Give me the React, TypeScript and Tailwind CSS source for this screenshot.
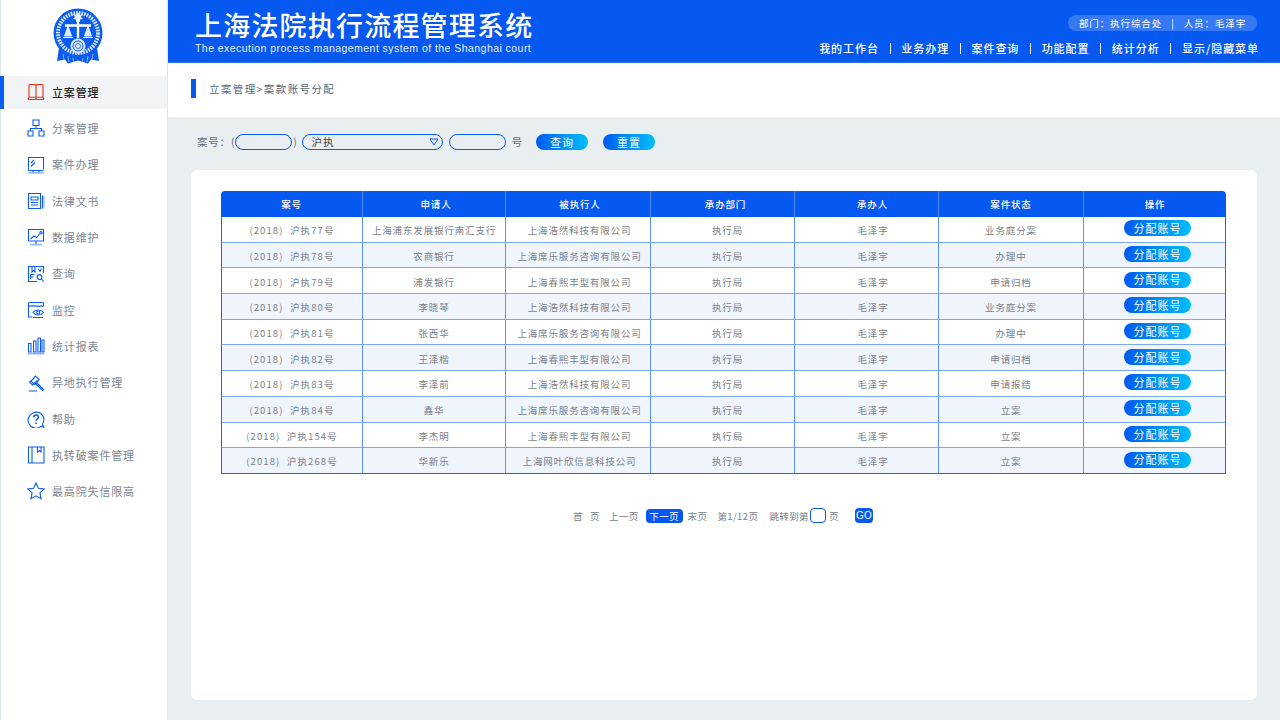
const cjk = { fontFamily: '"Noto Sans CJK SC", "Noto Sans", sans-serif' };

type Row = { no: string; applicant: string; respondent: string; status: string };

const rows: Row[] = [
  { no: "(2018)  沪执77号", applicant: "上海浦东发展银行南汇支行", respondent: "上海浩然科技有限公司", status: "业务庭分案" },
  { no: "(2018)  沪执78号", applicant: "农商银行", respondent: "上海席乐服务咨询有限公司", status: "办理中" },
  { no: "(2018)  沪执79号", applicant: "浦发银行", respondent: "上海春熙丰型有限公司", status: "申请归档" },
  { no: "(2018)  沪执80号", applicant: "李晓琴", respondent: "上海浩然科技有限公司", status: "业务庭分案" },
  { no: "(2018)  沪执81号", applicant: "张西华", respondent: "上海席乐服务咨询有限公司", status: "办理中" },
  { no: "(2018)  沪执82号", applicant: "王泽楷", respondent: "上海春熙丰型有限公司", status: "申请归档" },
  { no: "(2018)  沪执83号", applicant: "李泽前", respondent: "上海浩然科技有限公司", status: "申请报结" },
  { no: "(2018)  沪执84号", applicant: "鑫华", respondent: "上海席乐服务咨询有限公司", status: "立案" },
  { no: "(2018)  沪执154号", applicant: "李杰明", respondent: "上海春熙丰型有限公司", status: "立案" },
  { no: "(2018)  沪执268号", applicant: "华新乐", respondent: "上海网叶欣信息科技公司", status: "立案" },
];

const headers = ["案号", "申请人", "被执行人", "承办部门", "承办人", "案件状态", "操作"];
const headerPad = ["", "pl-[4px]", "pl-[4px]", "pl-[6px]", "pl-[12px]", "", ""];
const navLinks = ["我的工作台", "业务办理", "案件查询", "功能配置", "统计分析", "显示/隐藏菜单"];

function Icon({ children, color = "#0a5cf0" }: { children: React.ReactNode; color?: string }) {
  return (
    <svg width="18" height="18" viewBox="0 0 18 18" fill="none" stroke={color} strokeWidth="1.1">
      {children}
    </svg>
  );
}

const menu: { label: string; icon: React.ReactNode }[] = [
  {
    label: "立案管理",
    icon: (
      <Icon color="#e8321e">
        <path d="M2 1.500h6.200c.5 0 .8.3.8.8v12.200M16 1.500H9.800c-.5 0-.8.3-.8.8M2 1.500v12.800h14V1.500M1 16.500h16M2 14.300l-1 2.200M16 14.300l1 2.200M9 14.500v2" />
      </Icon>
    ),
  },
  {
    label: "分案管理",
    icon: (
      <Icon>
        <path d="M6 1h6v5.500H6zM1 12h5v5H1zM12 12h5v5h-5zM9 6.500v3M3.500 12V9.500h11V12" />
      </Icon>
    ),
  },
  {
    label: "案件办理",
    icon: (
      <Icon>
        <path d="M16.500 13.500V1.500h-15v13h15M4 7l3-3M4 10.500l4-4" />
        <path d="M6 14.500v2M12 14.500v2" />
        <path d="M1.500 16.800h15" stroke="#8db3f7" strokeWidth="1.600" />
      </Icon>
    ),
  },
  {
    label: "法律文书",
    icon: (
      <Icon>
        <path d="M13.500 16.500h-12v-15h12zM15.500 3.500v13M4 5h7v3H4zM4 10.500h7M4 13h7" />
        <path d="M17 4v11.500" stroke="#8db3f7" />
      </Icon>
    ),
  },
  {
    label: "数据维护",
    icon: (
      <Icon>
        <path d="M1.500 13V1.500h15v11.500h-15M3.500 11l3.500-3 2.500 1.500 3-3.500" />
        <circle cx="14" cy="4.800" r="1.200" />
        <path d="M9 13v3" />
        <path d="M3 16.600h12" stroke="#8db3f7" strokeWidth="1.600" />
      </Icon>
    ),
  },
  {
    label: "查询",
    icon: (
      <Icon>
        <path d="M16.500 8V1.500h-15v15H10M5 1.500V7l1.500-1.500L8 7V1.500M11 3.500l2 3 1.500-3M3.500 9.500h4M3.500 9.500v4.500M3.500 12h3" />
        <circle cx="12.500" cy="12" r="2.400" />
        <path d="M14.300 13.800l2.400 2.700" />
      </Icon>
    ),
  },
  {
    label: "监控",
    icon: (
      <Icon>
        <path d="M1.500 6V2.500c0-.6.4-1 1-1h13c.6 0 1 .4 1 1V5c-1 1-2-.6-3 0s-2 .6-3 0-2 .6-3 0-2 .6-3 0-2 .6-3 0" />
        <path d="M1.500 6v10h4M6 16.500h10" />
        <path d="M6 11.500c2.500-3.300 7.500-3.300 10.500 0-3 3.300-8 3.300-10.500 0z" />
        <circle cx="11.200" cy="11.500" r="1.500" />
      </Icon>
    ),
  },
  {
    label: "统计报表",
    icon: (
      <Icon>
        <path d="M1.500 6.500h2.500v8.500H1.500zM6.500 4h2.500v11H6.500zM11 1h2.500v14H11zM15 3h2v12h-2z" />
        <path d="M1 16.500h16" stroke="#8db3f7" strokeWidth="2" />
      </Icon>
    ),
  },
  {
    label: "异地执行管理",
    icon: (
      <Icon>
        <path d="M4 7l4.500-5 3.700 3.500-4.700 5zM7.500 3.800L2.500 8l3 3 5-4.500M9.500 8.500l7 7-1 1-7.200-7M2 17h8" />
      </Icon>
    ),
  },
  {
    label: "帮助",
    icon: (
      <Icon>
        <path d="M16.800 17.200l-2.400-1A8 8 0 1 1 17 9c0 2.400-.8 4-1.500 5z" />
        <path d="M6.800 7.200c0-3 4.600-3 4.600 0 0 1.700-2.300 1.800-2.300 3.600" strokeWidth="1.500" />
        <path d="M9 12.500v1.500" strokeWidth="1.600" />
      </Icon>
    ),
  },
  {
    label: "执转破案件管理",
    icon: (
      <Icon>
        <path d="M1.500 1h15.500v16H1.500zM5 1v16M10.500 1v5l1.800-1.300L14 6V1" />
      </Icon>
    ),
  },
  {
    label: "最高院失信限高",
    icon: (
      <Icon>
        <path d="M9 1l2.400 5.300 5.800.7-4.300 3.900 1.200 5.800L9 13.800l-5.100 2.900 1.200-5.800L.8 7l5.800-.7z" />
      </Icon>
    ),
  },
];

function Emblem() {
  return (
    <svg width="50" height="58" viewBox="0 0 50 58">
      <path d="M6 40l-2 13 8-1.500 3 4 10-3 10 3 3-4 8 1.500-2-13z" fill="#0a5cf0" />
      <path d="M10 46l1 5.500M15 48l1 6M20 50l.5 4M30 50l-.5 4M35 48l-1 6M40 46l-1 5.500" stroke="#a9c6fa" strokeWidth="0.800" />
      <circle cx="25" cy="25" r="24.500" fill="#0a5cf0" />
      <circle cx="25" cy="25" r="20" fill="none" stroke="#dbe7fd" strokeWidth="4" strokeDasharray="1.600 1.100" />
      <circle cx="25" cy="25" r="17.500" fill="#0a5cf0" />
      <path d="M25 4l2 3 3-1-2 3 2 2-3 .5V14h-4v-2.500L20 11l2-2-2-3 3 1z" fill="#e8f0fe" />
      <path d="M12 17.500h26M25 12v18" stroke="#fff" strokeWidth="2.400" />
      <path d="M15 18l-3.500 10h7zM35 18l-3.500 10h7z" fill="#dbe7fd" stroke="#fff" strokeWidth="0.800" />
      <path d="M10 29.500h10M30 29.500h10" stroke="#fff" strokeWidth="1.200" />
      <circle cx="25" cy="38" r="7.500" fill="#dbe7fd" />
      <circle cx="25" cy="38" r="5" fill="none" stroke="#0a5cf0" strokeWidth="1" />
      <circle cx="25" cy="38" r="2.500" fill="none" stroke="#0a5cf0" strokeWidth="0.800" />
    </svg>
  );
}

function Sidebar() {
  return (
    <aside className="w-[168px] h-[720px] shrink-0 bg-white border-x border-[#dbe7f8] flex flex-col">
      <div className="h-[74px] flex justify-center pt-[8px] pr-[12px] shrink-0">
        <Emblem />
      </div>
      <nav className="flex flex-col">
        {menu.map((item, i) => (
          <div key={item.label} className="h-[36.300px] flex items-center -ml-px">
            <div
              className={
                i === 0
                  ? "h-[33px] w-full flex items-center gap-[7px] pl-[23px] bg-[#f1f3f5] border-l-4 border-[#0a5cf0] text-[#222222] font-medium"
                  : "h-[33px] w-full flex items-center gap-[7px] pl-[27px] text-[#7b8694]"
              }
            >
              <span className="w-[18px] h-[18px] shrink-0 block">{item.icon}</span>
              <span className="text-[11px] tracking-[0.850px] whitespace-nowrap">{item.label}</span>
            </div>
          </div>
        ))}
      </nav>
    </aside>
  );
}

function Header() {
  return (
    <header className="h-[63px] bg-[#0558f0] border-b border-[#2b73f5] flex justify-between pl-[27px] pr-[21px] shrink-0">
      <div className="pt-[9px]">
        <div className="text-white text-[27px] leading-[32px] font-medium tracking-[1.200px] whitespace-nowrap">上海法院执行流程管理系统</div>
        <div
          className="text-[#e6efff] text-[10.500px] leading-[14px] tracking-[0.450px] whitespace-nowrap"
          style={{ fontFamily: '"Liberation Sans", sans-serif' }}
        >
          The execution process management system of the Shanghai court
        </div>
      </div>
      <div className="flex flex-col items-end pt-[15px]">
        <div className="h-[16px] w-[189px] mr-[2px] rounded-full bg-white/20 text-white text-[9.500px] tracking-[0.900px] flex items-center justify-center whitespace-pre">
          部门：执行综合处   |   人员：毛泽宇
        </div>
        <div className="flex items-center mt-[9px] text-white text-[11px] font-medium tracking-[0.950px] whitespace-nowrap">
          {navLinks.map((link, i) => (
            <div key={link} className="flex items-center">
              {i > 0 && <span className="w-px h-[11px] bg-white mx-[10.700px]" />}
              <span>{link}</span>
            </div>
          ))}
        </div>
      </div>
    </header>
  );
}

function SearchBar() {
  const pill = "h-[16px] rounded-full border border-[#0a5cf0]";
  const btn = "w-[52px] h-[16px] rounded-full bg-gradient-to-r from-[#0558f0] to-[#08bdf8] text-white text-[11px] tracking-[1px] flex items-center justify-center";
  return (
    <div className="h-[53px] flex items-center pl-[29px] pb-[3px] text-[#666e78] text-[10.500px] tracking-[0.800px] shrink-0">
      <span className="whitespace-nowrap">案号：(</span>
      <div className={`${pill} w-[57px]`} />
      <span className="ml-[1px] mr-[4px]">)</span>
      <div className={`${pill} w-[141px] flex items-center justify-between pl-[9px] pr-[3px] text-[#444444]`}>
        <span>沪执</span>
        <svg width="10" height="8" viewBox="0 0 10 8" fill="none" stroke="#0a5cf0" strokeWidth="1">
          <path d="M1 1h8L5 7z" />
        </svg>
      </div>
      <div className={`${pill} w-[57px] ml-[6px]`} />
      <span className="ml-[6px] mr-[13px]">号</span>
      <div className={btn}>查询</div>
      <div className={`${btn} ml-[15px]`}>重置</div>
    </div>
  );
}

function CaseTable() {
  const widths = [141, 143, 145, 144, 144, 145, 143];
  return (
    <table className="w-[1005px] table-fixed border-separate border-spacing-0 text-center text-[9.500px] text-[#7a7f88] tracking-[0.850px]">
      <colgroup>
        {widths.map((w, i) => (
          <col key={i} style={{ width: w }} />
        ))}
      </colgroup>
      <thead>
        <tr className="h-[26px] bg-[#0558f0] text-white font-medium">
          {headers.map((h, i) => (
            <th
              key={h}
              className={
                i === 0
                  ? "font-medium rounded-tl-[4px]"
                  : i === 6
                    ? "font-medium rounded-tr-[4px] border-l border-[#4d8cf8]"
                    : `font-medium border-l border-[#4d8cf8] ${headerPad[i]}`
              }
            >
              {h}
            </th>
          ))}
        </tr>
      </thead>
      <tbody>
        {rows.map((row, r) => {
          const zebra = r % 2 === 1 ? "bg-[#f0f4fc]" : "bg-white";
          const line = r === rows.length - 1 ? "border-b border-b-[#2066dc]" : "border-b border-b-[#7aa7f7]";
          const cell = `${zebra} ${line} border-l border-l-[#5a93f7] h-[25.700px] pt-[2px] pb-0 pr-0`;
          return (
            <tr key={r}>
              <td className={`${zebra} ${line} border-l border-l-[#2066dc] pt-[2px] pb-0 px-0 tracking-[1.100px] whitespace-pre`}>{row.no}</td>
              <td className={`${cell} pl-0`}>{row.applicant}</td>
              <td className={`${cell} pl-[3px]`}>{row.respondent}</td>
              <td className={`${cell} pl-[10px]`}>执行局</td>
              <td className={`${cell} pl-[13px]`}>毛泽宇</td>
              <td className={`${cell} pl-0`}>{row.status}</td>
              <td className={`${zebra} ${line} border-l border-l-[#5a93f7] border-r border-r-[#2066dc] p-0`}>
                <div className="w-[67px] h-[16px] ml-[40px] -mt-[2px] rounded-full bg-gradient-to-r from-[#0558f0] to-[#08bdf8] text-white text-[11px] tracking-[1px] flex items-center justify-center">
                  分配账号
                </div>
              </td>
            </tr>
          );
        })}
      </tbody>
    </table>
  );
}

function Pagination() {
  return (
    <div className="flex items-center justify-center mt-[34px] pr-[2px] h-[16px] text-[9.500px] text-[#7a8089] tracking-[0.400px] whitespace-nowrap">
      <span>首</span>
      <span className="ml-[7px]">页</span>
      <span className="ml-[9px]">上一页</span>
      <span className="ml-[7px] w-[37px] h-[14px] rounded-[4px] bg-[#0558f0] text-white flex items-center justify-center">下一页</span>
      <span className="ml-[5px]">末页</span>
      <span className="ml-[10px]">第1/12页</span>
      <span className="ml-[11px]">跳转到第</span>
      <span className="ml-[1px] w-[16px] h-[15px] rounded-[4px] border border-[#0558f0]" />
      <span className="ml-[3px]">页</span>
      <span
        className="ml-[16px] w-[18px] h-[15px] rounded-[4px] bg-[#0558f0] text-white text-[10px] tracking-normal flex items-center justify-center"
        style={{ fontFamily: '"Liberation Sans", sans-serif' }}
      >
        GO
      </span>
    </div>
  );
}

export default function App() {
  return (
    <div className="w-[1280px] h-[720px] flex overflow-hidden bg-[#e9eef1]" style={cjk}>
      <Sidebar />
      <main className="flex-1 flex flex-col min-w-0">
        <Header />
        <div className="h-[54px] bg-white flex items-center pl-[23px] pb-[4px] shrink-0">
          <span className="w-[5px] h-[19px] bg-[#0558f0]" />
          <span className="ml-[13px] mt-[1px] text-[10.500px] text-[#5d6570] tracking-[1.400px]">立案管理&gt;案款账号分配</span>
        </div>
        <SearchBar />
        <section className="ml-[23px] mr-[23px] h-[530px] bg-white rounded-[6px] pt-[21px] px-[30px]">
          <CaseTable />
          <Pagination />
        </section>
      </main>
    </div>
  );
}
